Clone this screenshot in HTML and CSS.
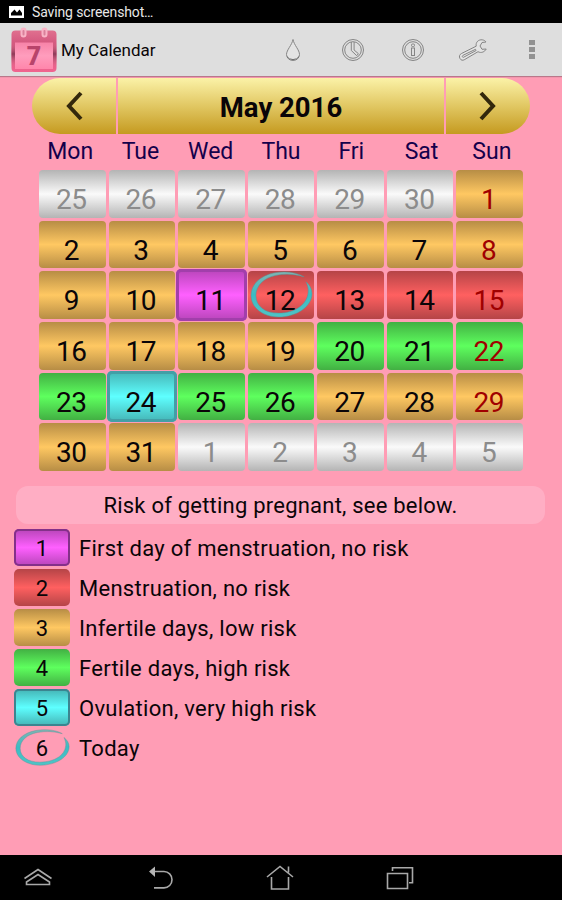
FILE: index.html
```html
<!DOCTYPE html>
<html lang="en">
<head>
    <meta charset="UTF-8">
    <meta name="viewport" content="width=device-width, initial-scale=1.0">
    <title>My Calendar</title>
    <link rel="stylesheet" href="styles.css">
</head>
<body>
    <div class="status">
        <svg width="15" height="12" viewBox="0 0 15 12">
            <path fill="#fff" fill-rule="evenodd" d="M0 0h15v12H0zM2 9.5h11V7L10.5 3.5 8 6.5 5.5 3.5 2 7z"/>
        </svg>
        <span>Saving screenshot…</span>
    </div>

    <header class="appbar">
        <svg class="logo" width="46" height="46" viewBox="0 0 46 46">
            <defs>
                <linearGradient id="top" x2="0" y2="1">
                    <stop offset="0" stop-color="#e0708f"/>
                    <stop offset=".3" stop-color="#d4587f"/>
                    <stop offset="1" stop-color="#f0648f"/>
                </linearGradient>
                <linearGradient id="page" x2="0" y2="1">
                    <stop offset="0" stop-color="#f783a8"/>
                    <stop offset=".5" stop-color="#ff9dbd"/>
                    <stop offset="1" stop-color="#ff86ab"/>
                </linearGradient>
                <linearGradient id="side" x2="0" y2="1">
                    <stop offset="0" stop-color="#e0708f" stop-opacity="0"/>
                    <stop offset=".5" stop-color="#8e3b58"/>
                    <stop offset="1" stop-color="#e0708f" stop-opacity="0"/>
                </linearGradient>
            </defs>
            <rect x=".5" y="3.500" width="45" height="41.500" rx="4" fill="url(#top)"/>
            <path fill="url(#side)" d="M.5 14h4v26h-4zM41.5 14h4v26h-4z"/>
            <rect x="4" y="15.500" width="38" height="26.500" fill="url(#page)"/>
            <path stroke="#f9b3c6" stroke-width="6" stroke-linecap="round" d="M12.500 3.500v4M33.500 3.500v4"/>
            <path stroke="#d9809a" stroke-width="2" stroke-linecap="round" d="M12.500 4v3.500M33.500 4v3.500"/>
            <text x="23" y="38" text-anchor="middle" class="logo-day">7</text>
        </svg>
        <h1 class="title">My Calendar</h1>
        <div class="actions">
            <svg width="32" height="32" viewBox="0 0 32 32">
                <path class="thin" fill="#e2e2e2" d="M16 5.500C15 11 9.500 16 9.500 20.500a6.500 6 0 0 0 13 0C22.500 16 17 11 16 5.500z"/>
                <path fill="none" stroke="#6f6f6f" d="M10 22.500a6.500 5 0 0 0 12 0"/>
            </svg>
            <svg width="32" height="32" viewBox="0 0 32 32">
                <circle class="thin" cx="16" cy="16" r="10.500"/>
                <circle class="thin" cx="16" cy="16" r="8.300"/>
                <path class="thin" d="M14.300 8v8.500l5.400 5.200 1.700-2-4.300-3.700V8"/>
            </svg>
            <svg width="32" height="32" viewBox="0 0 32 32">
                <circle class="thin" cx="16" cy="16" r="10.500"/>
                <circle class="thin" cx="16" cy="16" r="8.300"/>
                <rect class="thin" x="14.500" y="14" width="3" height="7.500"/>
                <rect class="thin" x="14.500" y="10" width="3" height="2.500" rx="1"/>
            </svg>
            <svg width="32" height="32" viewBox="0 0 32 32">
                <path class="thin" fill="#e6e6e6" d="M29 8c-1.500-2.500-6-3-8.300-.8-1.400 1.300-1.800 3-1.500 5L4.500 19.500c-2 1-2.700 3-1.500 5 1 2 2.800 2 4.200 1.300L21 17.700c3.300 1.800 6.800.1 8.200-2.700l-4.200.3-2-3.300 2-3.500z"/>
                <path class="thin" d="M6.500 23.300c-1.300.3-1.700-1.300-.5-2l12.500-6 .6 1.200z"/>
            </svg>
            <div class="dots"><span></span><span></span><span></span></div>
        </div>
    </header>

    <main>
        <div class="pager">
            <svg viewBox="0 0 84 56" width="84" height="56"><path class="arrow" d="M49 15 37 28 49 41"/></svg>
            <h2>May 2016</h2>
            <svg viewBox="0 0 84 56" width="84" height="56"><path class="arrow" d="M35 15 47 28 35 41"/></svg>
        </div>

        <div class="weekdays">
            <span>Mon</span><span>Tue</span><span>Wed</span><span>Thu</span><span>Fri</span><span>Sat</span><span>Sun</span>
        </div>

        <div class="month">
            <div class="day other"><b>25</b></div>
            <div class="day other"><b>26</b></div>
            <div class="day other"><b>27</b></div>
            <div class="day other"><b>28</b></div>
            <div class="day other"><b>29</b></div>
            <div class="day other"><b>30</b></div>
            <div class="day low sun"><b>1</b></div>

            <div class="day low"><b>2</b></div>
            <div class="day low"><b>3</b></div>
            <div class="day low"><b>4</b></div>
            <div class="day low"><b>5</b></div>
            <div class="day low"><b>6</b></div>
            <div class="day low"><b>7</b></div>
            <div class="day low sun"><b>8</b></div>

            <div class="day low"><b>9</b></div>
            <div class="day low"><b>10</b></div>
            <div class="day first"><b>11</b></div>
            <div class="day menses"><b>12</b>
                <svg class="ring" viewBox="0 0 64 48" preserveAspectRatio="none">
                    <use href="#ring"/>
                </svg>
            </div>
            <div class="day menses"><b>13</b></div>
            <div class="day menses"><b>14</b></div>
            <div class="day menses sun"><b>15</b></div>

            <div class="day low"><b>16</b></div>
            <div class="day low"><b>17</b></div>
            <div class="day low"><b>18</b></div>
            <div class="day low"><b>19</b></div>
            <div class="day fertile"><b>20</b></div>
            <div class="day fertile"><b>21</b></div>
            <div class="day fertile sun"><b>22</b></div>

            <div class="day fertile"><b>23</b></div>
            <div class="day ovulation"><b>24</b></div>
            <div class="day fertile"><b>25</b></div>
            <div class="day fertile"><b>26</b></div>
            <div class="day low"><b>27</b></div>
            <div class="day low"><b>28</b></div>
            <div class="day low sun"><b>29</b></div>

            <div class="day low"><b>30</b></div>
            <div class="day low"><b>31</b></div>
            <div class="day other"><b>1</b></div>
            <div class="day other"><b>2</b></div>
            <div class="day other"><b>3</b></div>
            <div class="day other"><b>4</b></div>
            <div class="day other"><b>5</b></div>
        </div>

        <p class="note">Risk of getting pregnant, see below.</p>

        <ul class="legend">
            <li><span class="key first">1</span><span>First day of menstruation, no risk</span></li>
            <li><span class="key menses">2</span><span>Menstruation, no risk</span></li>
            <li><span class="key low">3</span><span>Infertile days, low risk</span></li>
            <li><span class="key fertile">4</span><span>Fertile days, high risk</span></li>
            <li><span class="key ovulation">5</span><span>Ovulation, very high risk</span></li>
            <li>
                <span class="key">6
                    <svg class="ring" viewBox="0 0 64 48" preserveAspectRatio="none">
                        <defs>
                            <linearGradient id="teal" x1="0" y1="0" x2="0" y2="1">
                                <stop offset="0" stop-color="#7fb5b3"/>
                                <stop offset=".5" stop-color="#3bbcc4"/>
                                <stop offset="1" stop-color="#4fc4c6"/>
                            </linearGradient>
                        </defs>
                        <path id="ring" fill="url(#teal)" stroke="#5b9094" stroke-width=".5" d="M55 6C46 .5 34 0 24 2 10 5 1 14 1 25c0 13 13 22 28 22C48 47 63 36 63 23c0-5-2.500-9-6-12 1.500 4 2.500 7 2 11C58 34 46 43 29 43 15 43 6 36 6 25 6 15 14 7 26 4.500 36 2.500 45 3 55 6z"/>
                    </svg>
                </span>
                <span>Today</span>
            </li>
        </ul>
    </main>

    <footer class="navbar">
        <svg width="30" height="26" viewBox="0 0 30 26">
            <path d="M1.500 13.500 15 4.500l13.500 9M3.500 17 15 9.500 26.500 17v2.500h-23z"/>
        </svg>
        <svg width="30" height="26" viewBox="0 0 30 26">
            <path d="M9 6.500h11a8 8.200 0 0 1 0 16.400H10"/>
            <path class="solid" d="M5 6.500 11 1.500v10.500z"/>
        </svg>
        <svg width="30" height="26" viewBox="0 0 30 26">
            <path d="M2 12 15 1.500 28 12M23.500 7.500V1.500M6.500 12v12h17V12"/>
        </svg>
        <svg width="30" height="26" viewBox="0 0 30 26">
            <path d="M1.500 8.500h20v15h-20zM6.500 6V2.700h20v15H23"/>
        </svg>
    </footer>
</body>
</html>
```
FILE: styles.css
```css
*{
    margin: 0;
    padding: 0;
    box-sizing: border-box;
}
body{
    height: 900px;
    display: flex;
    flex-direction: column;
    background: #ff9db5;
    color: #0a0508;
    font-family: Roboto, sans-serif;
    overflow: hidden;
}
svg{
    display: block;
    flex: none;
}
.status{
    height: 23px;
    padding-left: 9px;
    display: flex;
    align-items: center;
    gap: 8px;
    background: #000;
    color: #e8e8e8;
    font-size: 14px;
    letter-spacing: -.13px;
}
.appbar{
    height: 53px;
    padding-left: 11px;
    display: flex;
    align-items: center;
    background: #dedede;
    box-shadow: 0 1px 1px #b9788a;
}
.logo-day{
    font: 900 25px Roboto, sans-serif;
    fill: #b8446b;
}
.title{
    padding-left: 4px;
    font-size: 17px;
    font-weight: 400;
}
.actions{
    margin-left: auto;
    padding-right: 27px;
    display: flex;
    align-items: center;
    gap: 28px;
}
.thin{
    fill: none;
    stroke: #858585;
    stroke-width: 1;
}
path.thin[fill]{
    fill: #e4e4e4;
}
.dots{
    width: 6px;
    margin-left: 12px;
    display: grid;
    gap: 2px;
}
.dots > span{
    height: 5px;
    background: #929292;
}
main{
    flex: 1;
    padding-top: 2px;
}
.pager{
    width: 498px;
    height: 56px;
    margin-left: 32px;
    display: flex;
    gap: 2px;
    border-radius: 28px;
    overflow: hidden;
}
.pager > *{
    background: linear-gradient(#fbf2a8, #e2c965 48%, #c59a20);
}
.pager > h2{
    flex: 1;
    text-align: center;
    font-size: 27.500px;
    line-height: 60px;
    font-weight: 700;
}
.arrow{
    fill: none;
    stroke: #33280c;
    stroke-width: 4;
}
.weekdays{
    height: 36px;
    width: 492px;
    margin-left: 35px;
    display: grid;
    grid-template-columns: repeat(7, 1fr);
    text-align: center;
    font-size: 23px;
    line-height: 35px;
    color: #14004b;
}
.month{
    width: 484px;
    margin-left: 39px;
    display: grid;
    grid-template-columns: repeat(7, 1fr);
    grid-auto-rows: 47.700px;
    gap: 3px;
}
.day{
    position: relative;
    display: flex;
    justify-content: center;
    border-radius: 4px;
    font-size: 28px;
    line-height: 60px;
}
.day > b{
    padding-right: 2px;
    font-weight: 400;
    letter-spacing: -.5px;
}
.other{
    background: linear-gradient(#b4b4b4, #fafafa 50%, #b4b4b4);
    color: #8c8c8c;
}
.low{
    background: linear-gradient(#b78d45, #ffc862 50%, #b78d45);
}
.menses{
    background: linear-gradient(#b54447, #ff6060 50%, #b54447);
}
.fertile{
    background: linear-gradient(#42b043, #5eff5e 50%, #42b043);
}
.first{
    background: linear-gradient(#b744b8, #ff60ff 50%, #b744b8);
}
.ovulation{
    background: linear-gradient(#44b3b4, #5effff 50%, #44b3b4);
}
.day.sun{
    color: #a00000;
}
.day.first,
.day.ovulation{
    margin: -2px;
    padding-top: 2px;
    border-radius: 5px;
}
.day.first{
    box-shadow: inset 0 0 0 3px #a23fab;
}
.day.ovulation{
    box-shadow: inset 0 0 0 3px #439fa6;
}
.ring{
    position: absolute;
    top: 0;
    left: 2px;
    width: 63px;
    height: 47px;
}
.note{
    width: 529px;
    height: 38px;
    margin: 15px 0 0 16px;
    border-radius: 12px;
    background: #ffaec4;
    text-align: center;
    font-size: 22px;
    line-height: 39px;
    letter-spacing: .22px;
}
.legend{
    padding: 5px 0 0 14px;
    display: grid;
    gap: 3px;
    list-style: none;
    font-size: 22px;
    letter-spacing: .27px;
}
.legend > li{
    display: flex;
    align-items: center;
    gap: 9px;
    height: 37px;
    line-height: 39px;
}
.key{
    position: relative;
    width: 56px;
    height: 37px;
    border-radius: 5px;
    text-align: center;
}
.key + span{
    padding-top: 1px;
}
.key.first{
    box-shadow: inset 0 0 0 2px #843089;
}
.key.ovulation{
    box-shadow: inset 0 0 0 2px #3b8590;
}
.key .ring{
    left: 1px;
    width: 55px;
    height: 37px;
}
.navbar{
    height: 45px;
    padding-left: 23px;
    display: flex;
    align-items: center;
    gap: 91px;
    background: #000;
}
.navbar path{
    fill: none;
    stroke: #a9a9a9;
    stroke-width: 1.600;
}
.navbar .solid{
    fill: #b5b5b5;
    stroke: none;
}
```
